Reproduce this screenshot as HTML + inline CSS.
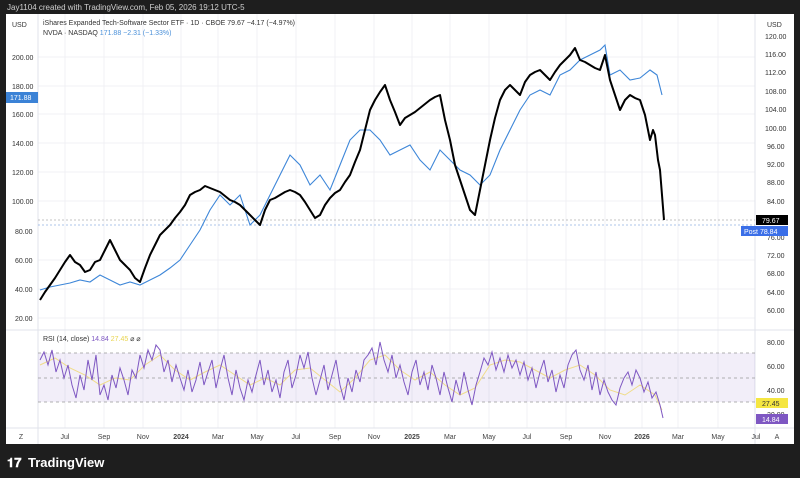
<!DOCTYPE html>
<html><head><meta charset="utf-8"><style>
body{margin:0;width:800px;height:478px;background:#1e1e1e;overflow:hidden;font-family:"Liberation Sans",sans-serif}
svg{position:absolute;left:0;top:0}
</style></head><body>
<svg width="800" height="478" viewBox="0 0 800 478" font-family="Liberation Sans, sans-serif">
<text x="7" y="10" font-size="8" fill="#d0d0d0">Jay1104 created with TradingView.com, Feb 05, 2026 19:12 UTC-5</text>
<rect x="6" y="14" width="788" height="430" fill="#fff"/>
<g stroke="#f0f1f4" stroke-width="1">
<line x1="65" y1="14" x2="65" y2="428"/><line x1="104" y1="14" x2="104" y2="428"/><line x1="143" y1="14" x2="143" y2="428"/><line x1="181" y1="14" x2="181" y2="428"/><line x1="218" y1="14" x2="218" y2="428"/><line x1="257" y1="14" x2="257" y2="428"/><line x1="296" y1="14" x2="296" y2="428"/><line x1="335" y1="14" x2="335" y2="428"/><line x1="374" y1="14" x2="374" y2="428"/><line x1="412" y1="14" x2="412" y2="428"/><line x1="450" y1="14" x2="450" y2="428"/><line x1="489" y1="14" x2="489" y2="428"/><line x1="527" y1="14" x2="527" y2="428"/><line x1="566" y1="14" x2="566" y2="428"/><line x1="605" y1="14" x2="605" y2="428"/><line x1="642" y1="14" x2="642" y2="428"/><line x1="678" y1="14" x2="678" y2="428"/><line x1="718" y1="14" x2="718" y2="428"/>
<line x1="38" y1="57" x2="755" y2="57"/><line x1="38" y1="86" x2="755" y2="86"/><line x1="38" y1="114" x2="755" y2="114"/><line x1="38" y1="143" x2="755" y2="143"/><line x1="38" y1="172" x2="755" y2="172"/><line x1="38" y1="201" x2="755" y2="201"/><line x1="38" y1="260" x2="755" y2="260"/><line x1="38" y1="289" x2="755" y2="289"/><line x1="38" y1="318" x2="755" y2="318"/>
</g>
<line x1="6" y1="330" x2="794" y2="330" stroke="#e0e3eb"/>
<line x1="38" y1="14" x2="38" y2="444" stroke="#e0e3eb"/>
<line x1="755" y1="14" x2="755" y2="444" stroke="#e0e3eb"/>
<line x1="6" y1="428" x2="794" y2="428" stroke="#e0e3eb"/>
<text x="12" y="27" font-size="7" fill="#333">USD</text>
<text x="767" y="27" font-size="7" fill="#333">USD</text>
<text x="43" y="25" font-size="7" fill="#333">iShares Expanded Tech-Software Sector ETF · 1D · CBOE  79.67  −4.17 (−4.97%)</text>
<text x="43" y="35" font-size="7" fill="#333">NVDA · NASDAQ <tspan fill="#4a90d9">171.88  −2.31 (−1.33%)</tspan></text>
<g font-size="7" fill="#333">
<text x="12" y="60">200.00</text><text x="12" y="89">180.00</text><text x="12" y="117">160.00</text><text x="12" y="146">140.00</text><text x="12" y="175">120.00</text><text x="12" y="204">100.00</text><text x="15" y="234">80.00</text><text x="15" y="263">60.00</text><text x="15" y="292">40.00</text><text x="15" y="321">20.00</text>
<text x="765" y="39">120.00</text><text x="765" y="57">116.00</text><text x="765" y="75">112.00</text><text x="765" y="94">108.00</text><text x="765" y="112">104.00</text><text x="765" y="131">100.00</text><text x="767" y="149">96.00</text><text x="767" y="167">92.00</text><text x="767" y="185">88.00</text><text x="767" y="204">84.00</text><text x="767" y="240">76.00</text><text x="767" y="258">72.00</text><text x="767" y="276">68.00</text><text x="767" y="295">64.00</text><text x="767" y="313">60.00</text>
<text x="767" y="345">80.00</text><text x="767" y="369">60.00</text><text x="767" y="393">40.00</text><text x="767" y="417">20.00</text>
</g>
<rect x="6" y="92" width="32" height="11" fill="#3b82d6"/><text x="10" y="100" font-size="7" fill="#fff">171.88</text>
<line x1="38" y1="220" x2="755" y2="220" stroke="#888" stroke-dasharray="2,2" stroke-width=".6"/>
<line x1="38" y1="225" x2="755" y2="225" stroke="#5a8ad6" stroke-dasharray="2,2" stroke-width=".6"/>
<rect x="756" y="215" width="32" height="10" fill="#000"/><text x="762" y="223" font-size="7" fill="#fff">79.67</text>
<rect x="741" y="226" width="47" height="10" fill="#3b6fe8"/><text x="744" y="234" font-size="7" fill="#fff">Post   78.84</text>
<polyline fill="none" stroke="#3d86d8" stroke-width="1.1" points="40,290 50,287 60,285 70,283 80,280 90,282 100,275 110,280 120,285 130,282 140,285 150,280 160,275 170,268 180,260 190,245 200,230 210,210 220,195 230,205 240,195 250,225 260,215 270,195 280,175 290,155 300,165 310,185 320,175 330,190 340,165 350,140 360,130 370,130 380,140 390,155 400,150 410,145 420,160 430,170 440,150 450,160 460,170 470,175 480,185 490,175 500,150 510,130 520,110 530,95 540,90 550,95 560,75 570,70 580,60 590,55 600,50 605,45 610,75 620,70 630,80 640,78 650,70 657,75 662,95"/>
<polyline fill="none" stroke="#000" stroke-width="2" stroke-linejoin="round" points="40,300 45,292 50,285 55,278 60,270 65,262 70,255 75,262 80,265 85,272 90,270 95,262 100,260 105,250 110,240 115,250 120,260 125,265 130,270 135,278 140,282 145,268 150,255 155,245 160,235 165,230 170,225 175,218 180,212 185,205 190,195 195,192 200,190 205,186 210,188 215,190 220,192 225,196 230,200 235,202 240,205 245,210 250,215 255,220 260,225 265,210 270,200 275,198 280,195 285,192 290,190 295,192 300,195 305,202 310,210 315,218 320,215 325,205 330,198 335,193 340,190 345,182 350,175 355,162 360,150 365,130 370,110 375,100 380,92 385,85 390,100 395,112 400,125 405,118 410,115 415,112 420,108 425,104 430,100 435,97 440,95 445,120 450,140 455,165 460,180 465,195 470,210 475,215 480,190 485,165 490,140 495,118 500,100 505,90 510,85 515,90 520,95 525,82 530,75 535,72 540,70 545,75 550,80 555,72 560,65 565,60 570,55 575,48 580,60 585,62 590,65 595,68 600,70 605,55 610,80 615,95 620,110 625,100 630,95 635,98 640,100 645,115 650,140 653,130 655,135 658,160 660,170 662,195 664,220"/>
<rect x="38" y="353" width="717" height="49" fill="#7e57c2" fill-opacity=".1"/>
<g stroke="#999" stroke-dasharray="3,3" stroke-width=".7"><line x1="38" y1="353" x2="755" y2="353"/><line x1="38" y1="378" x2="755" y2="378"/><line x1="38" y1="402" x2="755" y2="402"/></g>
<text x="43" y="341" font-size="7" fill="#333">RSI (14, close) <tspan fill="#7e57c2">14.84</tspan> <tspan fill="#e8d44d">27.45</tspan>  ⌀  ⌀</text>
<polyline fill="none" stroke="#f0dc8a" stroke-width="1" points="40,365 55,358 70,368 85,375 100,385 115,378 130,380 145,365 160,355 175,370 190,380 205,372 220,365 235,375 250,385 265,378 280,385 295,370 310,368 325,380 340,392 355,378 370,360 385,355 400,370 415,380 430,372 445,385 460,395 475,388 490,365 505,360 520,362 535,370 550,378 565,370 580,365 595,375 610,390 625,395 640,385 655,395 662,410"/>
<polyline fill="none" stroke="#7e57c2" stroke-width="1" points="40,360 44,352 48,365 52,350 56,372 60,360 64,378 68,365 72,385 76,398 80,375 84,390 88,360 92,380 96,355 100,395 104,385 108,400 112,375 116,388 120,368 124,380 128,395 132,370 136,378 140,355 144,368 148,350 152,360 156,345 160,350 164,372 168,360 172,382 176,365 180,378 184,390 188,370 192,392 196,380 200,362 204,385 208,372 212,360 216,388 220,370 224,355 228,378 232,395 236,370 240,388 244,400 248,380 252,392 256,375 260,360 264,385 268,370 272,392 276,380 280,398 284,372 288,360 292,388 296,375 300,355 304,368 308,352 312,378 316,395 320,380 324,365 328,390 332,375 336,360 340,385 344,400 348,378 352,392 356,370 360,382 364,360 368,355 372,348 376,365 380,342 384,360 388,372 392,355 396,378 400,365 404,382 408,395 412,372 416,360 420,385 424,372 428,390 432,365 436,378 440,395 444,372 448,388 452,402 456,380 460,395 464,372 468,390 472,405 476,385 480,372 484,358 488,365 492,352 496,370 500,358 504,372 508,355 512,368 516,360 520,375 524,362 528,380 532,368 536,388 540,372 544,360 548,382 552,370 556,392 560,375 564,388 568,365 572,355 576,350 580,370 584,380 588,365 592,390 596,372 600,395 604,380 608,392 612,400 616,405 620,388 624,378 628,372 632,385 636,370 640,378 644,392 648,382 652,398 656,392 660,405 663,418"/>
<rect x="756" y="398" width="32" height="10" fill="#f5e642"/><text x="762" y="406" font-size="7" fill="#333">27.45</text>
<rect x="756" y="414" width="32" height="10" fill="#7e57c2"/><text x="762" y="422" font-size="7" fill="#fff">14.84</text>
<g font-size="7" fill="#444" text-anchor="middle">
<text x="21" y="439">Z</text><text x="65" y="439">Jul</text><text x="104" y="439">Sep</text><text x="143" y="439">Nov</text><text x="181" y="439" font-weight="bold">2024</text><text x="218" y="439">Mar</text><text x="257" y="439">May</text><text x="296" y="439">Jul</text><text x="335" y="439">Sep</text><text x="374" y="439">Nov</text><text x="412" y="439" font-weight="bold">2025</text><text x="450" y="439">Mar</text><text x="489" y="439">May</text><text x="527" y="439">Jul</text><text x="566" y="439">Sep</text><text x="605" y="439">Nov</text><text x="642" y="439" font-weight="bold">2026</text><text x="678" y="439">Mar</text><text x="718" y="439">May</text><text x="756" y="439">Jul</text><text x="777" y="439">A</text>
</g>
<text x="7" y="467" font-size="13" font-weight="bold" fill="#fff">𝟏𝟕</text>
<text x="28" y="467" font-size="13" font-weight="bold" fill="#fff">TradingView</text>
</svg>
</body></html>
